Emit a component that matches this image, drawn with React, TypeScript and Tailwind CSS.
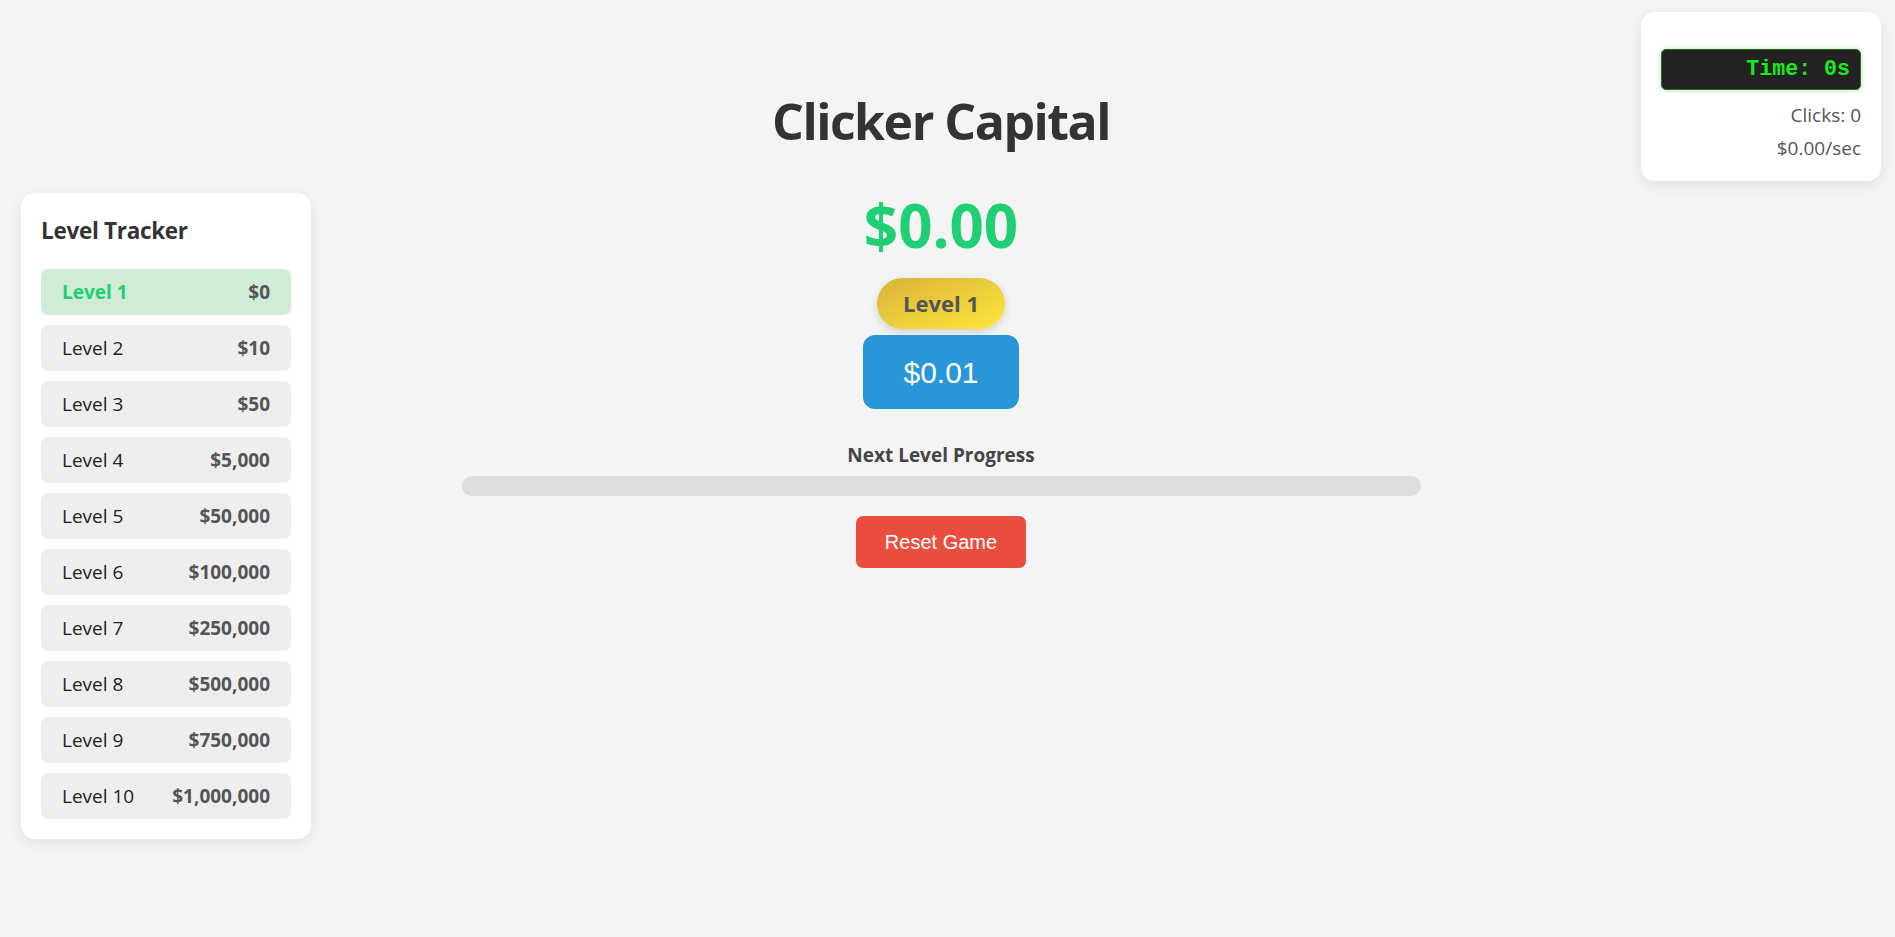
import React from 'react';

type Level = { name: string; cost: string };

const levels: Level[] = [
	{ name: 'Level 1', cost: '$0' },
	{ name: 'Level 2', cost: '$10' },
	{ name: 'Level 3', cost: '$50' },
	{ name: 'Level 4', cost: '$5,000' },
	{ name: 'Level 5', cost: '$50,000' },
	{ name: 'Level 6', cost: '$100,000' },
	{ name: 'Level 7', cost: '$250,000' },
	{ name: 'Level 8', cost: '$500,000' },
	{ name: 'Level 9', cost: '$750,000' },
	{ name: 'Level 10', cost: '$1,000,000' },
];

const currentLevel = 0;

function LevelTracker() {
	return (
		<div className="w-[290px] bg-white rounded-[14px] shadow-[0_4px_14px_rgba(0,0,0,0.08)] px-[20px] pt-[24px] pb-[20px]">
			<h2 className="text-[22.5px] leading-[28px] font-bold text-[#333] tracking-[-0.3px] mb-[24px]">Level Tracker</h2>
			<div className="flex flex-col gap-[10px]">
				{levels.map((lvl, i) => {
					const active = i === currentLevel;
					return (
						<div
							key={lvl.name}
							className={
								active
									? 'h-[46px] px-[21px] rounded-[7px] bg-[#d0ecd6] flex items-center justify-between text-[19px]'
									: 'h-[46px] px-[21px] rounded-[7px] bg-[#eeeeee] flex items-center justify-between text-[19px]'
							}
						>
							<span className={active ? 'font-bold text-[#1ecf73]' : 'text-[#222]'}>{lvl.name}</span>
							<span className="font-bold text-[#555]">{lvl.cost}</span>
						</div>
					);
				})}
			</div>
		</div>
	);
}

function StatsPanel() {
	return (
		<div className="w-[240px] bg-white rounded-[14px] shadow-[0_4px_14px_rgba(0,0,0,0.08)] px-[20px] pt-[37px] pb-[21px] text-right">
			<div className="h-[41px] bg-[#222] border border-[#2d6b2d] rounded-[5px] shadow-[0_0_5px_rgba(0,200,0,0.35)] flex items-center justify-end pr-[10px]">
				<span className="font-['Liberation_Mono','Courier_New',monospace] font-bold text-[21.6px] text-[#1aeb1a]">Time: 0s</span>
			</div>
			<p className="mt-[13px] text-[19px] leading-[24px] text-[#555]">Clicks: 0</p>
			<p className="mt-[9px] text-[19px] leading-[24px] text-[#555]">$0.00/sec</p>
		</div>
	);
}

export default function App() {
	return (
		<div className="min-h-screen bg-[#f4f4f4] font-['Open_Sans','Noto_Sans',sans-serif] flex items-start">
			<aside className="pl-[21px] pt-[193px] shrink-0">
				<LevelTracker />
			</aside>

			<main className="flex-1 flex flex-col items-center pr-[70px] pt-[91px]">
				<h1 className="text-[50px] leading-[60px] font-bold text-[#333] tracking-[-1.5px]">Clicker Capital</h1>
				<div className="mt-[39px] text-[60px] leading-[70px] font-bold text-[#1ecf73]">$0.00</div>
				<div className="mt-[18px] w-[128px] h-[51px] rounded-full bg-gradient-to-br from-[#d9b23a] to-[#fde83a] shadow-[0_3px_8px_rgba(0,0,0,0.15)] flex items-center justify-center text-[22px] font-bold text-[#555]">
					Level 1
				</div>
				<button className="mt-[6px] w-[156px] h-[74px] rounded-[12px] bg-[#2896d8] text-white text-[30px] font-['Liberation_Sans',Arial,sans-serif]">
					$0.01
				</button>
				<p className="mt-[34px] text-[19px] leading-[24px] font-bold text-[#444]">Next Level Progress</p>
				<div className="mt-[9px] w-[959px] h-[20px] rounded-full bg-[#dddddd] overflow-hidden">
					<div className="h-full bg-[#1ecf73]" style={{ width: '0%' }} />
				</div>
				<button className="mt-[20px] w-[170px] h-[52px] rounded-[7px] bg-[#ea4e3f] text-white text-[20px] font-['Liberation_Sans',Arial,sans-serif]">
					Reset Game
				</button>
			</main>

			<aside className="pr-[14px] pt-[12px] shrink-0">
				<StatsPanel />
			</aside>
		</div>
	);
}
